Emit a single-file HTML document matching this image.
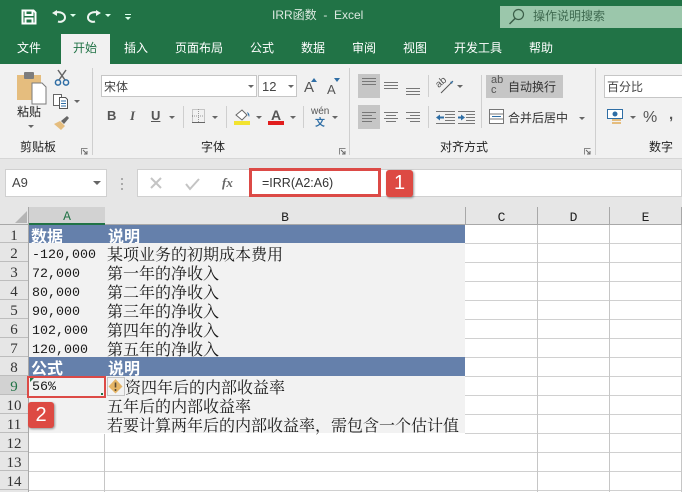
<!DOCTYPE html>
<html lang="zh"><head><meta charset="utf-8">
<style>
html,body{margin:0;padding:0;background:#fff}
#p{position:relative;width:682px;height:492px;overflow:hidden;background:#e6e6e6;font-family:"Liberation Sans","Noto Sans CJK SC",sans-serif;color:#333}
#p div,#p span.a{position:absolute;white-space:nowrap}
.t{font-size:12px;line-height:16px;color:#fff}
.r{font-size:12px;line-height:16px;color:#333}
.rh{left:0;width:28px;height:19px;text-align:center;font:15px/23px "Liberation Serif","Noto Serif CJK SC",serif;color:#333;background:#e6e6e6;border-bottom:1px solid #bdbdbd;box-sizing:border-box;overflow:hidden}
.ch{top:207px;height:18px;text-align:center;font:13px/21px "Liberation Mono",monospace;color:#222;border-right:1px solid #a8a8a8;box-sizing:border-box}
.cell{font:16px/19px "Liberation Serif","Noto Serif CJK SC",serif;color:#1a1a1a}
.num{font:13.33px/19px "Liberation Mono",monospace;color:#1a1a1a;left:32px}
.hd{font:bold 16px/19px "Noto Sans CJK SC",sans-serif;color:#fff;overflow:hidden}
.hl{left:465px;width:217px;height:1px;background:#d0d0d0}
.hl2{left:29px;width:653px;height:1px;background:#d0d0d0}
.vl{width:1px;background:#c6c6c6}
.sep{width:1px;background:#cfcfcf}
.dd{width:0;height:0;border-left:3px solid transparent;border-right:3px solid transparent;border-top:3px solid #666}
.badge{background:#dd4a43;border-radius:3px;color:#fff;font:20px/26px "Liberation Sans",sans-serif;text-align:center;box-shadow:1px 1px 2px rgba(0,0,0,.4)}
svg{position:absolute;overflow:visible}
</style></head><body>
<div id="p">
<!-- title -->
<div style="left:0;top:0;width:682px;height:64px;background:#217346"></div>
<div style="left:500px;top:6px;width:182px;height:22px;background:#9bc7ab"></div>
<svg style="left:21px;top:9px" width="16" height="16"><path d="M1.5 1.5h11l2 2v11h-13z M4.500 2v4h7V2 M4.500 14.500v-5h7v5" fill="none" stroke="#fff" stroke-width="2"/></svg>
<svg style="left:50px;top:8px" width="18" height="18"><path d="M5 4.500C11 3 15 6 15 9.500s-4 5-7 4" fill="none" stroke="#eef5f0" stroke-width="2"/><path d="M2 5l5-3v6z" fill="#eef5f0"/></svg>
<div class="dd" style="left:70px;top:14px;border-top-color:#dfe"></div>
<svg style="left:85px;top:8px" width="18" height="18"><path d="M13 4.500C7 3 3 6 3 9.500s4 5 7 4" fill="none" stroke="#eef5f0" stroke-width="2"/><path d="M16 5l-5-3v6z" fill="#eef5f0"/></svg>
<div class="dd" style="left:105px;top:14px;border-top-color:#dfe"></div>
<div style="left:125px;top:14px;width:6px;height:1px;background:#dfe"></div>
<div class="dd" style="left:125px;top:17px;border-top-color:#dfe"></div>
<div class="t" style="left:272px;top:7px;color:#dbe9e0">IRR函数&nbsp; -&nbsp; Excel</div>
<svg style="left:508px;top:8px" width="18" height="18"><circle cx="10.500" cy="6.500" r="5" fill="none" stroke="#3c5f49" stroke-width="1.200"/><path d="M7 10.500L1.500 16" stroke="#3c5f49" stroke-width="1.500"/></svg>
<div class="r" style="left:533px;top:8px;color:#3f6a50">操作说明搜索</div>
<!-- tabs -->
<div style="left:61px;top:34px;width:49px;height:30px;background:#f1f1f1"></div>
<div class="t" style="left:17px;top:40px">文件</div>
<div class="t" style="left:73px;top:40px;color:#217346">开始</div>
<div class="t" style="left:124px;top:40px">插入</div>
<div class="t" style="left:175px;top:40px">页面布局</div>
<div class="t" style="left:250px;top:40px">公式</div>
<div class="t" style="left:301px;top:40px">数据</div>
<div class="t" style="left:352px;top:40px">审阅</div>
<div class="t" style="left:403px;top:40px">视图</div>
<div class="t" style="left:454px;top:40px">开发工具</div>
<div class="t" style="left:529px;top:40px">帮助</div>
<!-- ribbon -->
<div style="left:0;top:64px;width:682px;height:94px;background:#f1f1f1"></div>
<div style="left:0;top:158px;width:682px;height:1px;background:#d6d6d6"></div>
<div class="sep" style="left:92px;top:68px;height:87px"></div>
<div class="sep" style="left:349px;top:68px;height:87px"></div>
<div class="sep" style="left:595px;top:68px;height:87px"></div>
<!-- clipboard -->
<svg style="left:17px;top:71px" width="30" height="32"><rect x="0" y="4" width="24" height="25" fill="#e5bd7e"/><rect x="7" y="1" width="10" height="7" rx="1" fill="#7d7d7d"/><path d="M15 12h10l4 4v17H15z" fill="#fff" stroke="#7a7a7a"/></svg>
<div class="r" style="left:17px;top:104px;color:#222">粘贴</div>
<div class="dd" style="left:28px;top:125px"></div>
<svg style="left:54px;top:70px" width="16" height="16"><path d="M4 0l7 10M12 0L5 10" stroke="#666" stroke-width="1.500"/><circle cx="4" cy="12.500" r="2.600" fill="none" stroke="#2f6ea5" stroke-width="1.500"/><circle cx="12" cy="12.500" r="2.600" fill="none" stroke="#2f6ea5" stroke-width="1.500"/></svg>
<svg style="left:53px;top:94px" width="16" height="15"><path d="M.5.500h8v11h-8z" fill="#fff" stroke="#666"/><path d="M6.500 3.500h6l2 2v9h-8z" fill="#fff" stroke="#555"/><path d="M8 7h5M8 9.500h5M8 12h5" stroke="#2f6ea5"/></svg>
<div class="dd" style="left:74px;top:100px"></div>
<svg style="left:54px;top:116px" width="16" height="15"><path d="M0 8l6-3 5 5-4 4z" fill="#e5bd7e"/><path d="M7 5l6-5 2 2-5 6z" fill="#666"/></svg>
<div class="r" style="left:20px;top:139px;color:#222">剪贴板</div>
<svg style="left:81px;top:148px" width="7" height="7"><path d="M.5 6.500v-6h6" fill="none" stroke="#888"/><path d="M2 2l4 4M6 3v3H3" fill="none" stroke="#666"/></svg>
<!-- font -->
<div style="left:101px;top:75px;width:156px;height:22px;background:#fff;border:1px solid #c6c6c6;box-sizing:border-box"></div>
<div style="left:258px;top:75px;width:39px;height:22px;background:#fff;border:1px solid #c6c6c6;box-sizing:border-box"></div>
<div class="r" style="left:104px;top:79px;color:#444">宋体</div>
<div class="dd" style="left:248px;top:85px"></div>
<div class="r" style="left:262px;top:79px;font-size:13px;color:#444">12</div>
<div class="dd" style="left:288px;top:85px"></div>
<div style="left:304px;top:79px;font:15px/18px 'Liberation Sans',sans-serif;color:#555">A</div>
<svg style="left:311px;top:78px" width="6" height="4"><path d="M0 4l3-4 3 4z" fill="#2f6ea5"/></svg>
<div style="left:327px;top:82px;font:13px/15px 'Liberation Sans',sans-serif;color:#555">A</div>
<svg style="left:334px;top:78px" width="6" height="4"><path d="M0 0l3 4 3-4z" fill="#2f6ea5"/></svg>
<div style="left:107px;top:108px;font:bold 13px/16px 'Liberation Sans',sans-serif;color:#555">B</div>
<div style="left:130px;top:108px;font:italic bold 13px/16px 'Liberation Serif',serif;color:#555">I</div>
<div style="left:151px;top:108px;font:bold 13px/16px 'Liberation Sans',sans-serif;color:#555;text-decoration:underline">U</div>
<div class="dd" style="left:169px;top:116px"></div>
<div class="sep" style="left:183px;top:106px;height:22px"></div>
<svg style="left:192px;top:109px" width="13" height="14"><path d="M.5.500h12v13H.500zM6.500 0v14M0 7h13" fill="none" stroke="#999" stroke-dasharray="1 1"/><path d="M0 13.500h13" stroke="#666"/></svg>
<div class="dd" style="left:212px;top:116px"></div>
<div class="sep" style="left:226px;top:106px;height:22px"></div>
<svg style="left:234px;top:109px" width="17" height="12"><path d="M2 6l6-5 5 5-5 5z" fill="#fff" stroke="#666"/><path d="M13 3c2 1 3 3 2 5z" fill="#2f6ea5"/></svg>
<div style="left:234px;top:121px;width:16px;height:4px;background:#f2e32f"></div>
<div class="dd" style="left:256px;top:116px"></div>
<div style="left:271px;top:107px;font:bold 14px/16px 'Liberation Sans',sans-serif;color:#555">A</div>
<div style="left:268px;top:121px;width:16px;height:4px;background:#e11d1d"></div>
<div class="dd" style="left:290px;top:116px"></div>
<div class="sep" style="left:303px;top:106px;height:22px"></div>
<div style="left:311px;top:106px;font:10px/12px 'Liberation Sans',sans-serif;color:#555">wén</div>
<div style="left:315px;top:116px;font:bold 10px/12px 'Noto Sans CJK SC',sans-serif;color:#2f6ea5">文</div>
<div class="dd" style="left:332px;top:116px"></div>
<div class="r" style="left:201px;top:139px;color:#222">字体</div>
<svg style="left:339px;top:148px" width="7" height="7"><path d="M.5 6.500v-6h6" fill="none" stroke="#888"/><path d="M2 2l4 4M6 3v3H3" fill="none" stroke="#666"/></svg>
<!-- alignment -->
<div style="left:358px;top:74px;width:22px;height:24px;background:#c6c6c6"></div>
<div style="left:358px;top:105px;width:22px;height:24px;background:#c6c6c6"></div>
<svg style="left:358px;top:74px" width="90" height="56" fill="none" stroke="#777">
<path d="M4 4.500h14M4 7.500h14M4 10.500h14"/>
<path d="M26 8.500h14M26 11.500h14M26 14.500h14"/>
<path d="M48 14.500h14M48 17.500h14M48 20.500h14"/>
<path d="M4 38.500h14M4 41.500h10M4 44.500h14M4 47.500h10"/>
<path d="M26 38.500h14M28 41.500h10M26 44.500h14M28 47.500h10"/>
<path d="M48 38.500h14M52 41.500h10M48 44.500h14M52 47.500h10"/>
</svg>
<div class="sep" style="left:428px;top:75px;height:22px"></div>
<div class="sep" style="left:428px;top:106px;height:22px"></div>
<div class="sep" style="left:481px;top:75px;height:53px"></div>
<div style="left:436px;top:78px;font:10px/10px 'Liberation Sans',sans-serif;color:#555;transform:rotate(-40deg)">ab</div>
<svg style="left:440px;top:78px" width="18" height="16"><path d="M1 15L13 3" stroke="#555"/><path d="M13 3l-3 1 2 2z" fill="#2f6ea5"/></svg>
<div class="dd" style="left:457px;top:85px"></div>
<svg style="left:436px;top:110px" width="40" height="16" fill="none">
<path d="M0 1.500h19M0 13.500h19M9 4.500h10M9 7.500h10M9 10.500h10" stroke="#777"/>
<path d="M3 7.500h5" stroke="#2f6ea5" stroke-width="2"/><path d="M0 7.500l4-3v6z" fill="#2f6ea5"/>
<path d="M22 1.500h17M22 13.500h17M30 4.500h9M30 7.500h9M30 10.500h9" stroke="#777"/>
<path d="M22 7.500h5" stroke="#2f6ea5" stroke-width="2"/><path d="M29 7.500l-4-3v6z" fill="#2f6ea5"/>
</svg>
<div style="left:486px;top:75px;width:77px;height:23px;background:#c6c6c6"></div>
<div style="left:491px;top:76px;font:11px/9.500px 'Liberation Sans',sans-serif;color:#555;white-space:normal;width:12px">ab<br>c</div>
<div class="r" style="left:508px;top:79px">自动换行</div>
<svg style="left:489px;top:109px" width="15" height="15" fill="#fff" stroke="#777"><path d="M.5.500h14v14H.500zM0 5h15M0 10h15"/><path d="M3 7.500h9" stroke="#2f6ea5"/></svg>
<div class="r" style="left:508px;top:110px">合并后居中</div>
<div class="dd" style="left:579px;top:117px"></div>
<div class="r" style="left:440px;top:139px;color:#222">对齐方式</div>
<svg style="left:584px;top:148px" width="7" height="7"><path d="M.5 6.500v-6h6" fill="none" stroke="#888"/><path d="M2 2l4 4M6 3v3H3" fill="none" stroke="#666"/></svg>
<!-- number -->
<div style="left:604px;top:75px;width:82px;height:23px;background:#fff;border:1px solid #c6c6c6;box-sizing:border-box"></div>
<div class="r" style="left:607px;top:79px;color:#444">百分比</div>
<svg style="left:607px;top:109px" width="17" height="17"><rect x=".5" y=".5" width="15" height="9" fill="#fff" stroke="#2f6ea5"/><circle cx="8" cy="5" r="2.500" fill="#2f6ea5"/><rect x="5" y="10" width="9" height="2" fill="#e5bd7e"/><rect x="5" y="13" width="9" height="2" fill="#e5bd7e"/></svg>
<div class="dd" style="left:630px;top:116px"></div>
<div style="left:643px;top:109px;font:16px/18px 'Liberation Sans',sans-serif;color:#555">%</div>
<div style="left:669px;top:106px;font:bold 15px/18px 'Liberation Sans',sans-serif;color:#555">,</div>
<div class="r" style="left:649px;top:139px;color:#222">数字</div>
<!-- formula bar -->
<div style="left:5px;top:169px;width:102px;height:28px;background:#fff;border:1px solid #d0d0d0;box-sizing:border-box"></div>
<div style="left:12px;top:175px;font:13px/16px 'Liberation Sans',sans-serif;color:#444">A9</div>
<div class="dd" style="left:93px;top:181px;border-left-width:4px;border-right-width:4px;border-top-width:4px"></div>
<div style="left:121px;top:178px;width:2px;height:2px;background:#aaa"></div>
<div style="left:121px;top:183px;width:2px;height:2px;background:#aaa"></div>
<div style="left:121px;top:188px;width:2px;height:2px;background:#aaa"></div>
<div style="left:137px;top:169px;width:545px;height:28px;background:#fff;border:1px solid #d0d0d0;box-sizing:border-box"></div>
<svg style="left:150px;top:177px" width="12" height="12"><path d="M1 1l10 10M11 1L1 11" stroke="#c4c4c4" stroke-width="2"/></svg>
<svg style="left:185px;top:178px" width="15" height="12"><path d="M1 6l4 5L14 1" fill="none" stroke="#c4c4c4" stroke-width="2"/></svg>
<div style="left:222px;top:174px;font:italic bold 13px/17px 'Liberation Serif',serif;color:#666">fx</div>
<div style="left:249px;top:168px;width:132px;height:29px;background:#fff;border:3px solid #dc4a46;box-sizing:border-box"></div>
<div style="left:262px;top:175px;font:12.500px/16px 'Liberation Sans',sans-serif;color:#333">=IRR(A2:A6)</div>
<div class="badge" style="left:386px;top:170px;width:27px;height:27px">1</div>
<!-- headers -->
<div style="left:0;top:207px;width:682px;height:18px;background:#e6e6e6;border-bottom:1px solid #a8a8a8;box-sizing:border-box"></div>
<svg style="left:15px;top:211px" width="12" height="12"><path d="M12 0v12H0z" fill="#b5b5b5"/></svg>
<div class="ch" style="left:29px;width:76px;background:#d2d2d2;color:#217346;border-right:0;border-bottom:2px solid #217346;height:18px;line-height:20px">A</div>
<div class="ch" style="left:105px;width:361px">B</div>
<div class="ch" style="left:466px;width:72px">C</div>
<div class="ch" style="left:538px;width:72px">D</div>
<div class="ch" style="left:610px;width:72px">E</div>
<!-- grid -->
<div style="left:29px;top:225px;width:653px;height:267px;background:#fff"></div>
<div class="hl2" style="top:452px"></div><div class="hl2" style="top:471px"></div><div class="hl2" style="top:490px"></div>
<div class="hl" style="top:243px"></div><div class="hl" style="top:262px"></div><div class="hl" style="top:281px"></div><div class="hl" style="top:300px"></div><div class="hl" style="top:319px"></div><div class="hl" style="top:338px"></div><div class="hl" style="top:357px"></div><div class="hl" style="top:376px"></div><div class="hl" style="top:395px"></div><div class="hl" style="top:414px"></div><div class="hl" style="top:433px"></div>
<div class="vl" style="left:537px;top:225px;height:267px"></div>
<div class="vl" style="left:609px;top:225px;height:267px"></div>
<div class="vl" style="left:681px;top:225px;height:267px"></div>
<div class="vl" style="left:104px;top:434px;height:58px"></div>
<div style="left:29px;top:243px;width:436px;height:190px;background:#f2f2f2"></div>
<div style="left:29px;top:225px;width:436px;height:18px;background:#6580ab"></div>
<div style="left:29px;top:357px;width:436px;height:19px;background:#6580ab"></div>
<!-- row headers -->
<div class="rh" style="top:225px;height:18px">1</div>
<div class="rh" style="top:243px">2</div><div class="rh" style="top:262px">3</div><div class="rh" style="top:281px">4</div><div class="rh" style="top:300px">5</div><div class="rh" style="top:319px">6</div><div class="rh" style="top:338px">7</div><div class="rh" style="top:357px">8</div>
<div class="rh" style="top:376px;background:#d2d2d2;color:#217346">9</div>
<div class="rh" style="top:395px">10</div><div class="rh" style="top:414px">11</div><div class="rh" style="top:433px">12</div><div class="rh" style="top:452px">13</div><div class="rh" style="top:471px">14</div>
<div style="left:28px;top:207px;width:1px;height:285px;background:#a8a8a8"></div>
<!-- cells -->
<div class="hd" style="left:31px;top:226px;height:17px">数据</div><div class="hd" style="left:108px;top:226px;height:17px">说明</div>
<div class="num" style="top:246px">-120,000</div><div class="cell" style="left:107px;top:246px">某项业务的初期成本费用</div>
<div class="num" style="top:265px">72,000</div><div class="cell" style="left:107px;top:265px">第一年的净收入</div>
<div class="num" style="top:284px">80,000</div><div class="cell" style="left:107px;top:284px">第二年的净收入</div>
<div class="num" style="top:303px">90,000</div><div class="cell" style="left:107px;top:303px">第三年的净收入</div>
<div class="num" style="top:322px">102,000</div><div class="cell" style="left:107px;top:322px">第四年的净收入</div>
<div class="num" style="top:341px">120,000</div><div class="cell" style="left:107px;top:341px">第五年的净收入</div>
<div class="hd" style="left:31px;top:358px;height:18px">公式</div><div class="hd" style="left:108px;top:358px;height:18px">说明</div>
<div class="cell" style="left:125px;top:379px">资四年后的内部收益率</div>
<div class="cell" style="left:107px;top:398px">五年后的内部收益率</div>
<div class="cell" style="left:107px;top:417px">若要计算两年后的内部收益率，需包含一个估计值</div>
<!-- selection -->
<div style="left:27px;top:376px;width:79px;height:22px;border:2px solid #dc4a46;box-sizing:border-box;background:#f2f2f2"></div>
<div class="num" style="top:378px">56%</div>
<svg style="left:30px;top:378px" width="4" height="4"><path d="M0 0h4L0 4z" fill="#217346"/></svg>
<div style="left:101px;top:393px;width:2px;height:2px;background:#217346"></div>
<div style="left:107px;top:377px;width:18px;height:19px;background:#f2f2f2;border:1px solid #c4c4c4;box-sizing:border-box"></div>
<svg style="left:108px;top:379px" width="15" height="15"><path d="M7.500 0l7 7.500-7 7-7-7z" fill="#e5b566"/><path d="M7.500 3.500v5M7.500 10v2" stroke="#5a4a30" stroke-width="1.600"/></svg>
<div class="badge" style="left:28px;top:402px;width:26px;height:26px">2</div>
</div>
</body></html>
